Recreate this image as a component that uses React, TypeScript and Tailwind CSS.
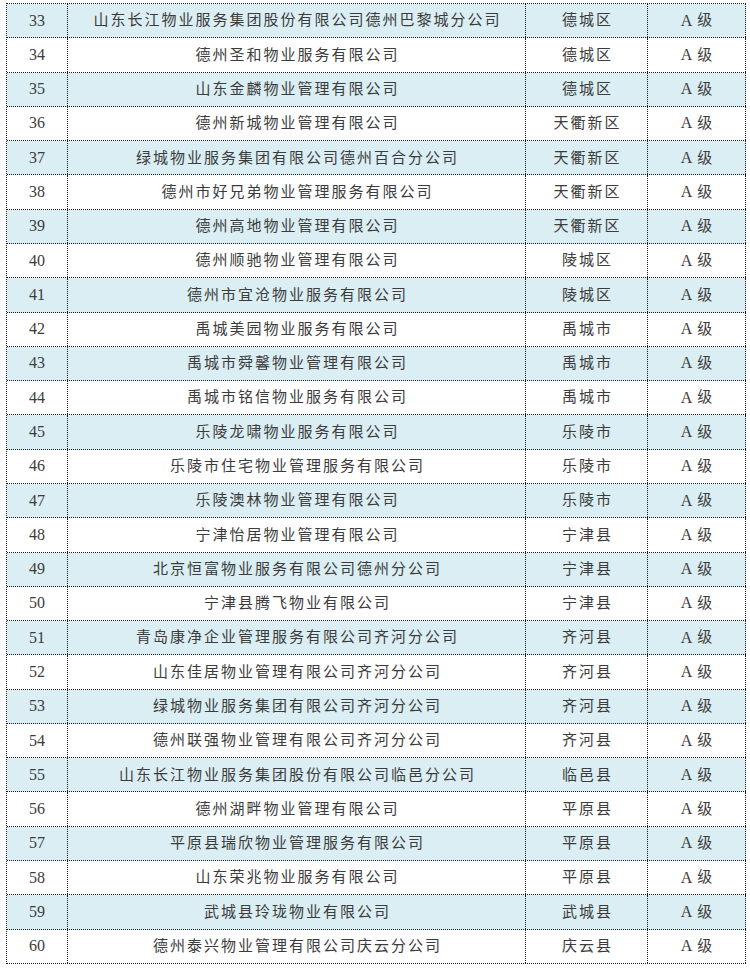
import React from "react";

const rows: [number, string, string][] = [
  [33, "山东长江物业服务集团股份有限公司德州巴黎城分公司", "德城区"],
  [34, "德州圣和物业服务有限公司", "德城区"],
  [35, "山东金麟物业管理有限公司", "德城区"],
  [36, "德州新城物业管理有限公司", "天衢新区"],
  [37, "绿城物业服务集团有限公司德州百合分公司", "天衢新区"],
  [38, "德州市好兄弟物业管理服务有限公司", "天衢新区"],
  [39, "德州高地物业管理有限公司", "天衢新区"],
  [40, "德州顺驰物业管理有限公司", "陵城区"],
  [41, "德州市宜沧物业服务有限公司", "陵城区"],
  [42, "禹城美园物业服务有限公司", "禹城市"],
  [43, "禹城市舜馨物业管理有限公司", "禹城市"],
  [44, "禹城市铭信物业服务有限公司", "禹城市"],
  [45, "乐陵龙啸物业服务有限公司", "乐陵市"],
  [46, "乐陵市住宅物业管理服务有限公司", "乐陵市"],
  [47, "乐陵澳林物业管理有限公司", "乐陵市"],
  [48, "宁津怡居物业管理有限公司", "宁津县"],
  [49, "北京恒富物业服务有限公司德州分公司", "宁津县"],
  [50, "宁津县腾飞物业有限公司", "宁津县"],
  [51, "青岛康净企业管理服务有限公司齐河分公司", "齐河县"],
  [52, "山东佳居物业管理有限公司齐河分公司", "齐河县"],
  [53, "绿城物业服务集团有限公司齐河分公司", "齐河县"],
  [54, "德州联强物业管理有限公司齐河分公司", "齐河县"],
  [55, "山东长江物业服务集团股份有限公司临邑分公司", "临邑县"],
  [56, "德州湖畔物业管理有限公司", "平原县"],
  [57, "平原县瑞欣物业管理服务有限公司", "平原县"],
  [58, "山东荣兆物业服务有限公司", "平原县"],
  [59, "武城县玲珑物业有限公司", "武城县"],
  [60, "德州泰兴物业管理有限公司庆云分公司", "庆云县"],
];

const cjk =
  "font-['Liberation_Serif','Noto_Sans_CJK_SC',serif] text-[15px] tracking-[2px] text-[#3c3c3c]";

export default function App() {
  return (
    <div className="w-[750px] h-[969px] bg-white pt-[3px] pl-[6px]">
      <div className="w-[740px] border-t border-l border-dotted border-[#1a1a1a]">
        {rows.map(([n, name, dist], i) => (
          <div
            key={n}
            className={`grid grid-cols-[61px_458px_122px_98px] h-[34.29px] border-b border-dotted border-[#1a1a1a] ${
              i % 2 === 0 ? "bg-[#daeef3]" : "bg-white"
            }`}
          >
            <div className="flex items-center justify-center border-r border-dotted border-[#1a1a1a] font-['Liberation_Serif',serif] text-[16px] text-[#3c3c3c]">
              {n}
            </div>
            <div className={`flex items-center justify-center border-r border-dotted border-[#1a1a1a] pl-[2px] ${cjk}`}>
              {name}
            </div>
            <div className={`flex items-center justify-center border-r border-dotted border-[#1a1a1a] pl-[2px] ${cjk}`}>
              {dist}
            </div>
            <div className="flex items-center justify-center border-r border-dotted border-[#1a1a1a] font-['Liberation_Serif','Noto_Sans_CJK_SC',serif] text-[15px] text-[#3c3c3c]">
              <span className="font-['Liberation_Serif',serif] text-[16px]">A</span>
              <span className="ml-[5px]">级</span>
            </div>
          </div>
        ))}
      </div>
    </div>
  );
}
